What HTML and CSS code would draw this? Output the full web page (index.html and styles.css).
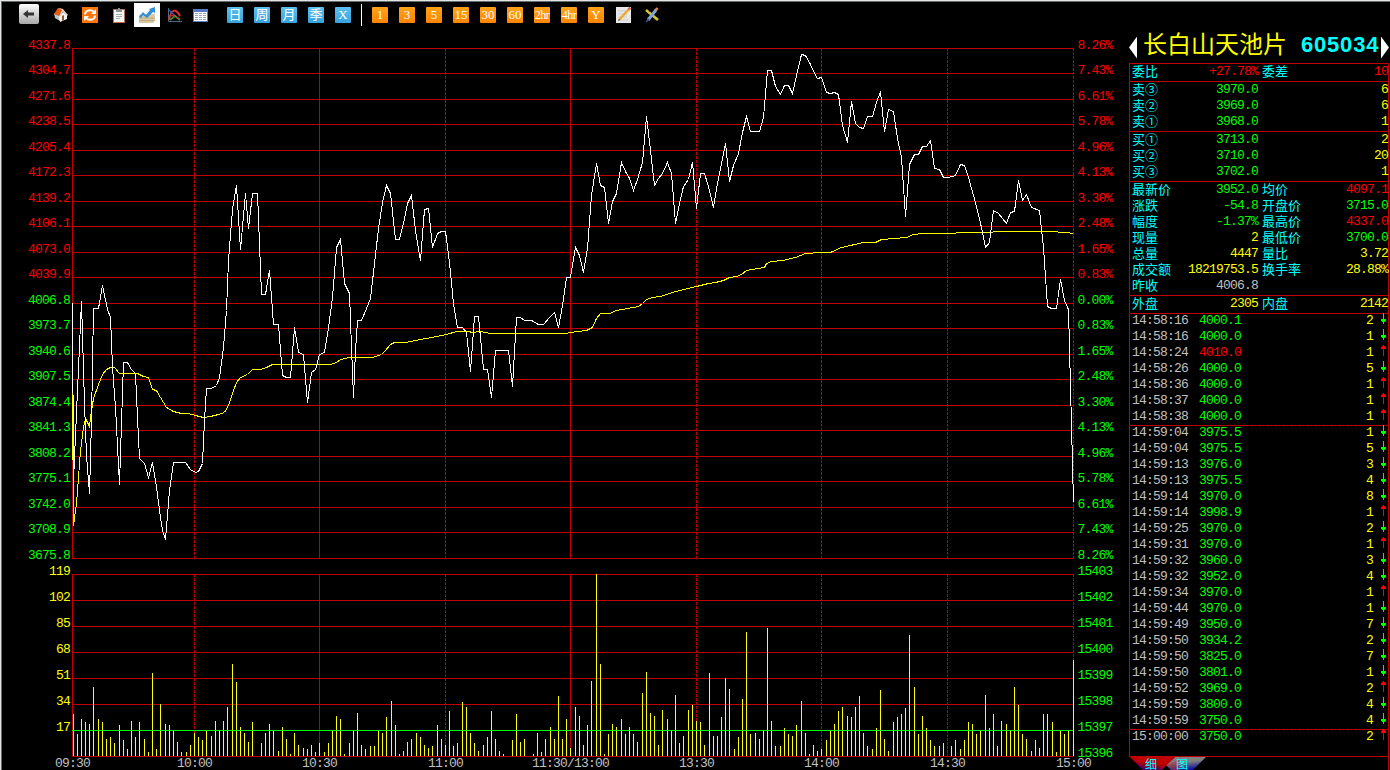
FILE: index.html
```html
<!DOCTYPE html>
<html lang="zh-CN">
<head>
    <meta charset="UTF-8">
    <title>长白山天池片 605034</title>
    <link rel="stylesheet" href="styles.css">
</head>
<body>
    <div class="main">
        <div class="toolbar">
            <svg class="icon back" width="20" height="20" viewBox="0 0 20 20">
                <defs><linearGradient id="metal" x2="0" y2="1"><stop offset="0" stop-color="#fff"/><stop offset="1" stop-color="#a8a8a8"/></linearGradient></defs>
                <rect width="20" height="20" rx="2" fill="url(#metal)"/>
                <path d="M4 10l5-4v2.500h6v3H9V14z" fill="#333"/>
            </svg>
            <svg class="icon home" width="16" height="16" viewBox="0 0 16 16">
                <path d="M1 6l6 3v5l-5-3z" fill="#c4c4c4"/><path d="M6 10l4-5 4 3v4l-7 3z" fill="#f4f4f4"/>
                <path d="M5 1l5 1-4 7-5-2z" fill="#e8590c"/><path d="M5 1l5 1 5 6-1 1-4-4-3 5-1-1 3-6z" fill="#d9cfc8"/>
                <path d="M9 9l2-1v5l-2 1z" fill="#8c5a30"/>
            </svg>
            <svg class="icon refresh" width="16" height="16" viewBox="0 0 16 16">
                <rect width="16" height="16" fill="#ff7300"/>
                <path d="M3 7.500C3 3 9 2 12 5M13 8.500C13 13 7 14 4 11" fill="none" stroke="#fff" stroke-width="2"/>
                <path d="M14 2v5H9zM2 14V9h5z" fill="#fff"/>
            </svg>
            <svg class="icon clip" width="12" height="15" viewBox="0 0 12 15">
                <path d="M0 1h12v14H0z" fill="#b96f4a"/><path d="M1 2h10v12H1z" fill="#f4f6f4"/>
                <path d="M3 1h2V0h2v1h2v3H3z" fill="#8b938f"/>
                <path d="M3 6.500h6M3 8.500h6M3 10.500h4" stroke="#9fb0ac"/>
            </svg>
            <div class="active">
                <svg width="16" height="16" viewBox="0 0 16 16">
                    <path d="M0 8l3-1h13v7l-2 2H0z" fill="#d9c9a4"/><path d="M0 11h15M0 13.500h15" stroke="#bca97d"/>
                    <path d="M0 10l4-5 3 3 4-5-1-1 6-2v6l-2-1-6 6-4-3-2 3z" fill="#2f8fd8"/>
                </svg>
            </div>
            <svg class="icon lines" width="15" height="15" viewBox="0 0 15 15" fill="none">
                <path d="M1.500 0v13.500H15" stroke="#4a6a8c"/>
                <path d="M2 12C4 1 9 0 13 8" stroke="#e02d2d" stroke-width="2"/>
                <path d="M2 2l5 5 5 4" stroke="#2b54b8" stroke-width="1.500"/>
                <path d="M3 12l5-4 5 4" stroke="#3b8a2f" stroke-width="1.800"/>
                <path d="M4 8l4-1 5 5" stroke="#e02d2d"/>
            </svg>
            <svg class="icon sheet" width="15" height="13" viewBox="0 0 15 13">
                <path d="M0 0h15v13H0z" fill="#5a78c8"/><path d="M1 3h13v9H1z" fill="#fff"/>
                <path d="M2 4.500h11M2 6.500h11M2 8.500h11M2 10.500h11" stroke="#9aa6bb"/><path d="M5.500 3v9M9.500 3v9" stroke="#fff"/>
            </svg>
            <div class="group period">
                <span>日</span><span>周</span><span>月</span><span>季</span><span>X</span>
            </div>
            <i class="sep"></i>
            <div class="group minutes">
                <span>1</span><span>3</span><span>5</span><span>15</span><span>30</span><span>60</span><span><b>2hr</b></span><span><b>4hr</b></span><span>Y</span>
            </div>
            <svg class="icon note" width="16" height="16" viewBox="0 0 16 16">
                <path d="M0 0h15v16H0z" fill="#e8e8e8"/><path d="M2 4h9M2 7h9M2 10h9M2 13h11" stroke="#ccc"/>
                <path d="M3 13L13 2" stroke="#f0a830" stroke-width="2.400"/><path d="M12.500 2.500L14.500.5" stroke="#d86a70" stroke-width="2.500"/><path d="M2 14l2-1-1-1z" fill="#333"/>
            </svg>
            <svg class="icon tools" width="15" height="16" viewBox="0 0 15 16">
                <path d="M1 3l12 10" stroke="#d4c72c" stroke-width="2.800"/><path d="M3 3l2 2" stroke="#555"/>
                <path d="M3 13l8-10" stroke="#7fa4d8" stroke-width="3"/><path d="M1 15l3-3" stroke="#3b5590" stroke-width="1.500"/><path d="M10.500 3.500l2-2.500" stroke="#e08a30" stroke-width="2.800"/>
            </svg>
        </div>
        <svg class="chart" id="chart" width="1126" height="742" viewBox="2 28 1126 742"></svg>
    </div>

    <div class="side">
        <div class="title">
            <i class="prev"></i>
            <span class="name">长白山天池片</span>
            <span class="code">605034</span>
            <i class="next"></i>
        </div>
        <div class="box">
            <div class="row"><label>委比</label><span class="red">+27.78%</span><label>委差</label><span class="red">10</span></div>
        </div>
        <div class="box">
            <div class="row"><label>卖③</label><span class="green">3970.0</span><label></label><span class="yellow">6</span></div>
            <div class="row"><label>卖②</label><span class="green">3969.0</span><label></label><span class="yellow">6</span></div>
            <div class="row"><label>卖①</label><span class="green">3968.0</span><label></label><span class="yellow">1</span></div>
        </div>
        <div class="box">
            <div class="row"><label>买①</label><span class="green">3713.0</span><label></label><span class="yellow">2</span></div>
            <div class="row"><label>买②</label><span class="green">3710.0</span><label></label><span class="yellow">20</span></div>
            <div class="row"><label>买③</label><span class="green">3702.0</span><label></label><span class="yellow">1</span></div>
        </div>
        <div class="box">
            <div class="row"><label>最新价</label><span class="green">3952.0</span><label>均价</label><span class="red">4097.1</span></div>
            <div class="row"><label>涨跌</label><span class="green">-54.8</span><label>开盘价</label><span class="green">3715.0</span></div>
            <div class="row"><label>幅度</label><span class="green">-1.37%</span><label>最高价</label><span class="red">4337.0</span></div>
            <div class="row"><label>现量</label><span class="yellow">2</span><label>最低价</label><span class="green">3700.0</span></div>
            <div class="row"><label>总量</label><span class="yellow">4447</span><label>量比</label><span class="yellow">3.72</span></div>
            <div class="row"><label>成交额</label><span class="yellow">18219753.5</span><label>换手率</label><span class="yellow">28.88%</span></div>
            <div class="row"><label>昨收</label><span class="grey">4006.8</span><label></label><span></span></div>
        </div>
        <div class="box">
            <div class="row"><label>外盘</label><span class="yellow">2305</span><label>内盘</label><span class="yellow">2142</span></div>
        </div>
        <div class="box ticks"><div class="list" id="ticks"></div></div>
        <div class="tabs">
            <svg width="90" height="13" viewBox="0 0 90 13">
                <defs>
                    <linearGradient id="tabRed" x1="0" y1="1" x2=".5" y2="0"><stop offset="0" stop-color="#0000a0"/><stop offset=".6" stop-color="#c00000"/></linearGradient>
                    <linearGradient id="tabGrey" x1=".3" y1="0" x2=".7" y2="1"><stop offset=".4" stop-color="#808080"/><stop offset="1" stop-color="#0000a0"/></linearGradient>
                </defs>
                <path d="M46 0h31L64 13H42L37 8z" fill="url(#tabGrey)"/>
                <path d="M1 0h45L33 13H14z" fill="url(#tabRed)"/>
                <path d="M38 8l5 5h8V2z" fill="#b02030" opacity=".5"/>
                <text x="16" y="12">细</text>
                <text x="47" y="12">图</text>
            </svg>
        </div>
    </div>
    <script src="script.js"></script>
</body>
</html>
```
FILE: styles.css
```css
* {
    box-sizing: border-box;
}

body {
    margin: 0;
    width: 1390px;
    height: 770px;
    overflow: hidden;
    display: grid;
    grid-template-columns: 1fr 261px;
    padding: 1px 0 0 1px;
    background: #000;
    border-top: 1px solid #e4e6e6;
    border-left: 1px solid #e4e6e6;
    box-shadow: inset 1px 1px 0 #646c6c;
    font-family: "Liberation Mono", "Noto Sans CJK SC", monospace;
    font-size: 13px;
    color: #c0c0c0;
}

.main {
    display: flex;
    flex-direction: column;
}

/* toolbar */
.toolbar {
    height: 26px;
    padding-left: 17px;
    display: flex;
    align-items: center;
    flex: none;
}

.toolbar svg {
    flex: none;
    display: block;
}

.back {
    margin-top: -2px;
}

.home {
    margin-left: 14px;
}

.refresh {
    margin-left: 13px;
}

.clip {
    margin-left: 15px;
}

.active {
    width: 26px;
    height: 24px;
    margin-left: 9px;
    background: #fff;
    display: flex;
    align-items: center;
    justify-content: center;
}

.lines {
    margin-left: 7px;
}

.sheet {
    margin-left: 11px;
}

.group {
    display: flex;
    gap: 11px;
}

.group span {
    width: 16px;
    height: 16px;
    border-radius: 1px;
    color: #fff;
    font-family: "Liberation Serif", "Noto Sans CJK SC", serif;
    font-size: 13px;
    line-height: 16px;
    display: flex;
    justify-content: center;
    white-space: nowrap;
}

.group b {
    font-weight: normal;
    font-size: 12px;
    letter-spacing: -0.5px;
}

.period {
    margin-left: 19px;
}

.period span {
    background: linear-gradient(#5cc0f0, #36a3dc);
}

.sep {
    width: 1px;
    height: 22px;
    margin: 0 10px;
    background: #fff;
}

.minutes span {
    background: linear-gradient(#ffa31a, #ff8400);
}

.note {
    margin-left: 12px;
}

.tools {
    margin-left: 13px;
}

/* chart */
.chart {
    display: block;
}

.chart text {
    font-size: 13px;
    letter-spacing: -0.8px;
}

.chart line,
.chart rect,
.chart polyline {
    shape-rendering: crispEdges;
    fill: none;
}

.chart .grid {
    stroke: #c00000;
}

.chart .dash {
    stroke-dasharray: 3 1;
}

.chart .price {
    stroke: #fff;
}

.chart .avg {
    stroke: #ff0;
}

.chart .bar {
    fill: #ff0;
}

.chart .level {
    stroke: #0f0;
}

.chart .up { fill: #f00; }
.chart .down { fill: #0f0; }
.chart .vol { fill: #ff0; }
.chart .time { fill: #c0c0c0; }

/* quote panel */
.side {
    display: flex;
    flex-direction: column;
}

.title {
    height: 61px;
    padding: 21px 0 0 0;
    display: flex;
    align-items: center;
}

.prev,
.next {
    width: 8px;
    height: 22px;
    margin-top: 9px;
    background: #fff;
    clip-path: polygon(100% 0, 100% 100%, 0 50%);
}

.next {
    clip-path: polygon(0 0, 100% 50%, 0 100%);
    margin-left: 2px;
}

.name {
    width: 157px;
    padding-left: 6px;
    color: #ff0;
    font-family: "Noto Sans CJK SC", sans-serif;
    font-size: 24px;
    font-weight: 400;
    line-height: 24px;
    white-space: nowrap;
}

.code {
    width: 78px;
    margin: 3px 0 0 7px;
    color: #0ff;
    font: bold 22px/24px "Liberation Sans", sans-serif;
    letter-spacing: 0.8px;
}

.box {
    width: 260px;
    padding-bottom: 1px;
    border: 1px solid #c00000;
    border-bottom: 0;
}

.row {
    height: 16px;
    padding-left: 2px;
    display: grid;
    grid-template-columns: 48px 78px 47px 83px;
    line-height: 15px;
    white-space: nowrap;
}

.row label {
    color: #0ff;
    font-family: "Noto Sans CJK SC", sans-serif;
    line-height: 13px;
}

.row label + span + label {
    margin-left: 4px;
}

.row span {
    letter-spacing: -0.8px;
    justify-self: end;
}

.red { color: #f00; }
.green { color: #0f0; }
.yellow { color: #ff0; }
.grey { color: #c0c0c0; }

.ticks {
    height: 443px;
    padding: 0;
}

.list {
    margin-top: -1px;
}

.tick {
    height: 16px;
    padding-left: 2px;
    display: grid;
    grid-template-columns: 67px 1fr 20px 15px;
    line-height: 15px;
    letter-spacing: -0.8px;
}

.tick .yellow {
    text-align: right;
}

.tick svg {
    display: block;
    margin-left: 8px;
    shape-rendering: crispEdges;
}

/* first tick of a new minute */
.minute {
    background: repeating-linear-gradient(90deg, #c00000 0 3px, transparent 3px 4px) 0 0 / 100% 1px no-repeat;
}

.tabs {
    height: 14px;
    border-top: 1px solid #c00000;
    width: 260px;
    border-right: 1px solid #c00000;
}

.tabs svg {
    display: block;
}

.tabs text {
    fill: #0ff;
    font: 12px "Noto Sans CJK SC", sans-serif;
}
```
FILE: script.js
```js
const chart = document.getElementById('chart');
const LEFT = 72, RIGHT = 1074;
const TOP = 48, BOTTOM = 558;
const VOL_TOP = 574, VOL_BOTTOM = 756;

const price = '72,303 73,480 77,390 81,301 84,403 86,455 89,493 91,420 93,308 98,308 102,285 107,309 110,317 112,367 115,407 119,484 123,362 127,362 131,369 135,373 137,417 139,458 144,463 148,477 152,462 156,487 160,517 162,530 165,539 169,490 173,462 185,462 190,469 195,472 198,471 202,463 204,420 206,388 211,388 216,385 219,377 223,347 226,310 228,260 232,209 236,185 240,249 245,193 248,228 252,193 257,193 261,294 265,294 269,270 273,324 278,324 282,375 286,377 290,377 294,327 298,352 303,354 307,402 311,372 315,369 319,354 324,352 328,327 332,297 336,247 340,239 344,283 349,293 351,347 353,397 355,350 357,320 361,320 366,308 370,298 374,263 378,228 382,202 386,185 390,193 395,239 399,239 403,223 407,203 411,195 415,230 420,260 424,209 428,208 432,247 437,233 441,231 445,231 449,262 453,303 457,327 462,327 466,332 470,371 474,316 478,316 483,369 487,369 491,397 495,350 508,350 512,386 516,317 520,317 524,320 531,320 538,324 543,324 549,317 554,312 558,327 562,305 566,277 570,277 575,247 579,255 583,272 587,248 591,195 596,163 600,185 604,187 608,223 612,201 616,193 621,162 625,171 629,178 633,190 637,179 642,162 646,116 650,150 654,185 658,178 662,173 667,162 671,173 675,223 679,203 683,186 688,179 692,162 696,208 700,173 704,173 708,186 713,207 717,183 721,163 725,143 729,181 733,165 738,153 742,132 746,116 750,131 759,131 763,117 767,70 771,70 775,86 780,94 784,85 788,85 792,93 796,75 801,54 805,55 810,64 814,73 817,78 821,77 826,92 830,93 834,92 838,94 842,125 847,142 851,101 855,123 859,127 863,128 867,116 872,116 876,102 880,91 884,131 888,109 893,111 897,138 901,157 905,216 909,164 914,154 918,154 922,146 926,146 930,140 934,168 939,169 943,177 948,177 955,175 960,164 964,165 968,177 973,195 977,210 981,227 985,247 989,242 993,210 998,213 1006,223 1010,212 1014,211 1018,180 1022,200 1026,194 1031,207 1039,210 1043,247 1047,306 1051,308 1056,308 1060,279 1064,300 1068,309 1073,502';

const avg = '72,391 73,525 76,503 78,477 80,450 83,427 85,418 89,426 90,417 93,398 98,384 102,374 106,369 110,367 114,367 119,373 137,373 143,376 148,377 152,389 156,390 160,397 166,407 173,411 181,413 188,413 195,415 203,417 210,416 218,414 224,412 228,405 232,393 236,382 240,377 247,374 252,369 260,369 266,367 272,364 330,364 336,362 340,359 349,357 372,357 381,354 385,350 390,344 394,342 405,342 420,339 431,337 446,334 456,331 468,331 472,332 480,331 490,333 565,333 570,332 586,330 592,327 596,318 600,313 609,313 616,310 638,306 642,303 646,299 652,297 660,296 675,291 696,286 708,283 715,282 723,280 729,277 736,276 741,274 746,270 764,267 766,263 771,261 782,260 795,257 805,253 820,252 830,252 841,247 863,242 875,242 881,239 906,237 913,234 923,233 942,233 970,232 1016,231 1048,231 1066,232 1073,233';

// bar heights, one per trading minute
const volume = [
    42, 22, 37, 34, 32, 69, 37, 34, 17, 19, 13, 31, 16, 7, 35, 19, 34, 17, 4, 83,
    7, 52, 32, 31, 25, 14, 4, 4, 11, 23, 19, 16, 25, 20, 35, 25, 35, 49, 92, 74,
    29, 23, 14, 34, 0, 13, 23, 32, 25, 5, 29, 17, 2, 23, 11, 8, 7, 11, 4, 13,
    4, 13, 25, 40, 37, 2, 13, 25, 43, 11, 7, 10, 10, 25, 23, 39, 55, 31, 2, 5,
    14, 17, 23, 19, 11, 8, 10, 31, 17, 11, 45, 10, 13, 54, 49, 23, 13, 5, 11, 19,
    45, 17, 5, 2, 0, 16, 42, 14, 17, 0, 2, 23, 4, 17, 29, 17, 60, 17, 37, 8,
    49, 40, 11, 31, 75, 182, 92, 2, 22, 32, 29, 37, 22, 29, 22, 14, 63, 84, 43, 40,
    11, 46, 37, 25, 61, 13, 20, 46, 51, 35, 34, 11, 83, 20, 20, 39, 78, 67, 7, 19,
    57, 124, 22, 23, 17, 25, 128, 35, 10, 10, 28, 22, 20, 31, 55, 23, 2, 11, 5, 7,
    16, 25, 32, 45, 49, 40, 39, 49, 60, 23, 10, 7, 28, 66, 17, 5, 34, 39, 42, 48,
    121, 69, 22, 40, 28, 16, 10, 10, 13, 0, 10, 16, 7, 16, 34, 32, 22, 25, 61, 28,
    42, 10, 35, 32, 25, 69, 51, 22, 17, 5, 16, 8, 42, 42, 34, 4, 25, 22, 25, 96
];

const prices = ['4337.8', '4304.7', '4271.6', '4238.5', '4205.4', '4172.3', '4139.2', '4106.1', '4073.0', '4039.9', '4006.8', '3973.7', '3940.6', '3907.5', '3874.4', '3841.3', '3808.2', '3775.1', '3742.0', '3708.9', '3675.8'];
const percents = ['8.26%', '7.43%', '6.61%', '5.78%', '4.96%', '4.13%', '3.30%', '2.48%', '1.65%', '0.83%', '0.00%', '0.83%', '1.65%', '2.48%', '3.30%', '4.13%', '4.96%', '5.78%', '6.61%', '7.43%', '8.26%'];
const volumes = ['119', '102', '85', '68', '51', '34', '17'];
const amounts = ['15403', '15402', '15401', '15400', '15399', '15398', '15397', '15396'];
const times = [
    [72, '09:30', true], [194, '10:00'], [319, '10:30', true], [445, '11:00'], [570, '11:30/13:00', true],
    [696, '13:30'], [821, '14:00'], [947, '14:30'], [1073, '15:00']
];

const CHAR = 7;
let svg = '';

function line(x1, y1, x2, y2, cls) {
    svg += `<line class="${cls}" x1="${x1}" y1="${y1}" x2="${x2}" y2="${y2}"/>`;
}

function label(x, y, text, cls) {
    svg += `<text class="${cls}" x="${x}" y="${y}">${text}</text>`;
}

prices.forEach((p, i) => {
    const y = Math.floor(TOP + 25.5 * i);
    line(LEFT, y + 0.5, RIGHT, y + 0.5, 'grid');
    label(70 - p.length * CHAR, y + 1, p, i < 10 ? 'up' : 'down');
    label(1077.5, y + 1, percents[i], i < 10 ? 'up' : 'down');
});

amounts.forEach((a, i) => {
    const y = VOL_TOP + 26 * i;
    line(LEFT, y + 0.5, RIGHT, y + 0.5, 'grid');
    if (volumes[i]) label(70 - volumes[i].length * CHAR, y + 1, volumes[i], 'vol');
    label(1077.5, y + 1, a, 'down');
});

times.forEach(([x, text, solid]) => {
    const cls = solid ? 'grid' : 'grid dash';
    line(x + 0.5, TOP, x + 0.5, BOTTOM, cls);
    line(x + 0.5, VOL_TOP, x + 0.5, VOL_BOTTOM, cls);
    label(x + 0.5 - text.length * CHAR / 2, 767, text, 'time');
});

volume.forEach((h, i) => {
    const x = Math.floor(68.85 + 4.184 * (i + 1));
    svg += `<rect class="bar" x="${x}" y="${VOL_BOTTOM - h}" width="1" height="${h}"/>`;
});
line(LEFT, 730.5, RIGHT - 1, 730.5, 'level');

svg += `<g transform="translate(.5 .5)"><polyline class="avg" points="${avg}"/><polyline class="price" points="${price}"/></g>`;
chart.innerHTML = svg;

// time, price, lots, direction
const ticks = `14:58:16 4000.1 2 d
14:58:16 4000.0 1 d
14:58:24 4010.0 1 u
14:58:26 4000.0 5 d
14:58:36 4000.0 1 u
14:58:37 4000.0 1 u
14:58:38 4000.0 1 u
14:59:04 3975.5 1 d
14:59:04 3975.5 5 d
14:59:13 3976.0 3 d
14:59:13 3975.5 4 d
14:59:14 3970.0 8 d
14:59:14 3998.9 1 u
14:59:25 3970.0 2 d
14:59:31 3970.0 1 u
14:59:32 3960.0 3 d
14:59:32 3952.0 4 d
14:59:34 3970.0 1 u
14:59:44 3970.0 1 d
14:59:49 3950.0 7 d
14:59:50 3934.2 2 d
14:59:50 3825.0 7 d
14:59:50 3801.0 1 d
14:59:52 3969.0 2 u
14:59:59 3800.0 4 d
14:59:59 3750.0 4 d
15:00:00 3750.0 2 u`.split('\n').map(t => t.split(' '));

const arrows = {
    u: '<svg width="5" height="11" viewBox="0 0 5 11"><path d="M2 0h1v1h1v1h1v2H3v7H2V4H0V2h1V1h1z" fill="#f00"/></svg>',
    d: '<svg width="5" height="11" viewBox="0 0 5 11"><path d="M2 0h1v6h2v2H4v1H3v2H2V9H1V8H0V6h2z" fill="#0f0"/></svg>'
};

document.getElementById('ticks').innerHTML = ticks.map(([time, p, lots, dir], i) => {
    const minute = i && ticks[i - 1][0].slice(0, 5) !== time.slice(0, 5) ? ' minute' : '';
    return `<div class="tick${minute}">
        <span>${time}</span>
        <span class="${p > 4006.8 ? 'red' : 'green'}">${p}</span>
        <span class="yellow">${lots}</span>
        ${arrows[dir]}
    </div>`;
}).join('');
```
